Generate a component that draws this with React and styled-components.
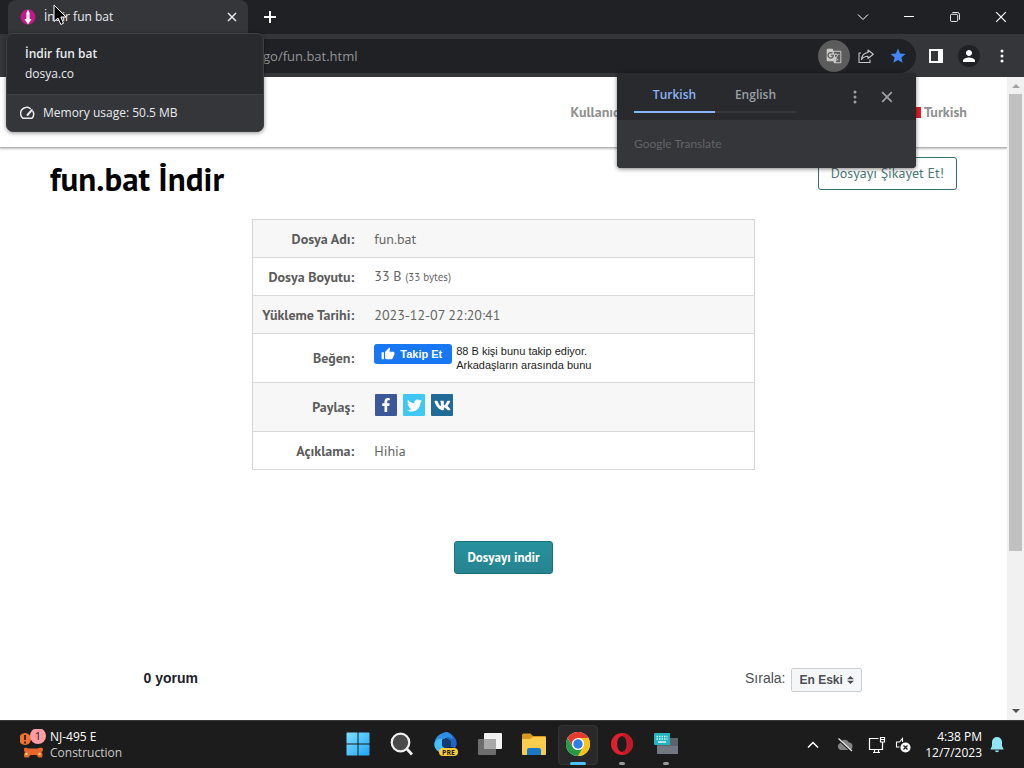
import React from "react";
import styled, { createGlobalStyle } from "styled-components";
import { FaFacebookF, FaTwitter, FaVk } from "react-icons/fa";
import { MdStar, MdPerson, MdGTranslate, MdThumbUp } from "react-icons/md";

const GlobalStyle = createGlobalStyle`
  *, *::before, *::after { box-sizing: border-box; }
  body { margin: 0; background: #fff; }
  button, input, select { font: inherit; color: inherit; margin: 0; }
  button { padding: 0; border: 0; background: none; cursor: pointer; }
  svg { display: block; flex: none; }
`;

const systemFont = `"Segoe UI", "Open Sans", "Noto Sans", sans-serif`;
const siteFont = `"PT Sans", "Noto Sans", sans-serif`;

const Desktop = styled.div`
  position: relative;
  display: flex;
  flex-direction: column;
  min-height: 100vh;
  overflow: hidden;
  font: 12px/16px ${systemFont};
`;

/* ---------- browser window ---------- */

const TabStrip = styled.header`
  display: flex;
  align-items: stretch;
  height: 34px;
  padding-left: 8px;
  background: #202124;
  color: #e8eaed;
`;

const Tab = styled.div`
  display: flex;
  align-items: center;
  gap: 8px;
  width: 240px;
  padding: 0 10px 0 12px;
  background: #35363a;
  border-radius: 8px 8px 0 0;
`;

const TabTitle = styled.span`
  flex: 1;
`;

const IconButton = styled.button`
  display: flex;
  align-items: center;
  justify-content: center;
  width: ${(p) => p.$w || 28}px;
  height: ${(p) => p.$h || 28}px;
  border-radius: ${(p) => (p.$round ? "50%" : "0")};
  background: ${(p) => p.$bg || "transparent"};
  color: ${(p) => p.$color || "inherit"};
`;

const NewTab = styled(IconButton)`
  align-self: center;
  margin-left: 8px;
`;

const WindowControls = styled.div`
  display: flex;
  align-items: center;
  margin-left: auto;
  color: #fff;
`;

const Toolbar = styled.div`
  display: flex;
  align-items: center;
  height: 43px;
  padding: 0 8px 0 112px;
  background: #35363a;
  color: #fff;
`;

const AddressBar = styled.div`
  display: flex;
  align-items: center;
  flex: 1;
  height: 34px;
  padding: 0 2px 0 151px;
  border-radius: 17px;
  background: #202124;
`;

const AddressInput = styled.input`
  flex: 1;
  min-width: 0;
  padding: 0;
  border: 0;
  outline: 0;
  background: transparent;
  color: #929497;
  font-size: 13px;
`;

const ToolbarActions = styled.div`
  display: flex;
  align-items: center;
  gap: 8px;
  margin-left: 6px;
`;

const Viewport = styled.main`
  display: flex;
  flex: 1;
  background: #fff;
`;

const Scrollbar = styled.div`
  display: flex;
  flex-direction: column;
  align-items: center;
  width: 17px;
  background: #f1f1f1;
`;

const ScrollArrow = styled.button`
  display: flex;
  align-items: center;
  justify-content: center;
  width: 17px;
  height: 17px;
`;

const ScrollTrack = styled.div`
  flex: 1;
  width: 13px;
`;

const ScrollThumb = styled.div`
  height: 75%;
  background: #c1c1c1;
`;

/* ---------- web page ---------- */

const Page = styled.div`
  flex: 1;
  min-width: 0;
  font: 14px/20px ${siteFont};
  color: #666;
`;

const SiteHeader = styled.nav`
  display: flex;
  align-items: center;
  justify-content: flex-end;
  height: 71px;
  padding-right: 40px;
  border-bottom: 1px solid #b4b4b4;
  box-shadow: 0 1px 2px rgba(0, 0, 0, 0.25);
`;

const NavLink = styled.a`
  display: flex;
  align-items: center;
  gap: 3px;
  margin-left: ${(p) => p.$gap || 0}px;
  color: #8f8f8f;
  font-weight: 700;
  text-decoration: none;
`;

const Flag = styled.span`
  width: 16px;
  height: 11px;
  background: #e11b22;
`;

const TitleRow = styled.section`
  display: flex;
  align-items: flex-start;
  justify-content: space-between;
  padding: 9px 50px 0;
`;

const Title = styled.h1`
  margin: 0;
  padding-top: 2px;
  color: #000;
  font: 700 33px/40px ${siteFont};
`;

const ReportLink = styled.a`
  padding: 0 12px;
  border: 1px solid #33706f;
  border-radius: 3px;
  color: #4c7777;
  line-height: 31px;
  text-decoration: none;
`;

const FileTable = styled.table`
  width: 50%;
  margin: 20px auto 0;
  border: 1px solid #d5d5d5;
  border-collapse: collapse;
`;

const Row = styled.tr`
  height: ${(p) => (p.$tall ? 49 : 38)}px;
  border-bottom: 1px solid #d9d9d9;
  &:nth-child(odd) {
    background: #f7f7f7;
  }
`;

const Label = styled.th`
  width: 102px;
  padding: 0;
  color: #5c5c5c;
  font-weight: 700;
  text-align: right;
  white-space: nowrap;
`;

const Value = styled.td`
  padding: 0 0 0 20px;
`;

const Bytes = styled.small`
  font-size: 11px;
`;

const Follow = styled.div`
  display: flex;
  align-items: flex-start;
  gap: 4px;
  color: #1c1e21;
  font: 11px/14px "Liberation Sans", Arial, sans-serif;
`;

const FollowButton = styled.button`
  display: flex;
  align-items: center;
  gap: 5px;
  height: 20px;
  padding: 0 10px 0 7px;
  border-radius: 3px;
  background: #1877f2;
  color: #fff;
  font-weight: 700;
`;

const ShareList = styled.div`
  display: flex;
  gap: 6px;
  padding: 0 0 4px 1px;
`;

const ShareLink = styled.a`
  display: flex;
  align-items: center;
  justify-content: center;
  width: 22px;
  height: 22px;
  border-radius: 1px;
  background: ${(p) => p.$bg};
  color: #fff;
`;

const DownloadRow = styled.div`
  display: flex;
  justify-content: center;
  margin-top: 71px;
`;

const DownloadButton = styled.button`
  height: 33px;
  padding: 0 12px;
  border: 1px solid #1d6f79;
  border-radius: 3px;
  background: linear-gradient(#27929f, #26838f);
  color: #fff;
  font-size: 13px;
  font-weight: 700;
`;

const Comments = styled.section`
  display: flex;
  align-items: flex-start;
  justify-content: space-between;
  width: 720px;
  max-width: 100%;
  margin: 94px auto 0;
  padding-right: 2px;
  color: #4b4f56;
  font: 14px/20px "Liberation Sans", Arial, sans-serif;
`;

const CommentCount = styled.h2`
  margin: 0;
  color: #1d2129;
  font-size: 14px;
`;

const SortLabel = styled.label`
  display: flex;
  align-items: flex-start;
  gap: 5px;
`;

const SortBox = styled.span`
  display: grid;
  align-items: center;
  width: 71px;
  > * {
    grid-area: 1 / 1;
  }
  > svg {
    justify-self: end;
    margin-right: 8px;
    pointer-events: none;
  }
`;

const SortSelect = styled.select`
  appearance: none;
  width: 100%;
  height: 24px;
  padding: 0 8px;
  border: 1px solid #ccd0d5;
  border-radius: 2px;
  background: #f5f6f7;
  font-size: 12px;
  font-weight: 700;
`;

/* ---------- floating layers ---------- */

const TabCard = styled.aside`
  position: absolute;
  top: 33px;
  left: 6px;
  width: 258px;
  border: 1px solid #3f4043;
  border-radius: 7px;
  overflow: hidden;
  background: #292a2d;
  color: #e8eaed;
  line-height: 20px;
  box-shadow: 0 1px 4px rgba(0, 0, 0, 0.45);
`;

const TabCardText = styled.div`
  padding: 10px 18px;
`;

const TabCardTitle = styled.strong`
  display: block;
  font-weight: 600;
`;

const MemoryRow = styled.div`
  display: flex;
  align-items: center;
  gap: 8px;
  height: 37px;
  padding: 0 13px;
  border-top: 1px solid #3f4043;
  background: #35363a;
  font-size: 12px;
`;

const TranslateCard = styled.aside`
  position: absolute;
  top: 73px;
  right: 108px;
  width: 299px;
  border-radius: 4px;
  overflow: hidden;
  background: #292a2d;
  color: #9aa0a6;
  box-shadow: 0 1px 4px rgba(0, 0, 0, 0.5);
`;

const TranslateTop = styled.div`
  display: flex;
  align-items: center;
  height: 47px;
  padding: 0 12px 0 17px;
`;

const LanguageTab = styled.button`
  width: 81px;
  height: 32px;
  padding-bottom: 2px;
  border-bottom: 2px solid ${(p) => (p.$active ? "#8ab4f8" : "#35373a")};
  color: ${(p) => (p.$active ? "#8ab4f8" : "#9aa0a6")};
  font-weight: 600;
`;

const LanguageTabs = styled.div`
  display: flex;
  padding-top: 0;
`;

const TranslateTools = styled.div`
  display: flex;
  gap: 1px;
  margin-left: auto;
`;

const TranslateFoot = styled.div`
  height: 48px;
  padding-left: 17px;
  background: #35363a;
  color: #626467;
  font: 12px/47px Lato, sans-serif;
`;

const Cursor = styled.svg`
  position: absolute;
  top: 4px;
  left: 53px;
`;

/* ---------- taskbar ---------- */

const Taskbar = styled.footer`
  display: grid;
  grid-template-columns: 1fr auto 1fr;
  align-items: center;
  height: 48px;
  padding: 0 20px;
  border-top: 1px solid #3a3a3a;
  background: #1c1c1c;
  color: #fff;
`;

const Traffic = styled.button`
  display: flex;
  align-items: center;
  gap: 4px;
  justify-self: start;
  text-align: left;
`;

const TrafficDetail = styled.span`
  display: block;
  color: #c8c8c8;
`;

const Apps = styled.div`
  display: flex;
  gap: 4px;
`;

const TaskbarApp = styled.button`
  display: grid;
  grid-template-rows: 36px 3px;
  place-items: center;
  width: 40px;
  height: 40px;
  border: 1px solid ${(p) => (p.$active ? "#343434" : "transparent")};
  border-radius: 4px;
  background: ${(p) => (p.$active ? "#292929" : "transparent")};
  &::after {
    content: "";
    width: ${(p) => (p.$active ? 16 : 6)}px;
    height: 3px;
    border-radius: 2px;
    background: ${(p) => (p.$active ? "#4cc2ff" : p.$running ? "#9a9a9a" : "transparent")};
  }
`;

const Tray = styled.div`
  display: flex;
  align-items: center;
  justify-self: end;
`;

const Clock = styled.time`
  margin: 0 8px 0 12px;
  text-align: right;
`;

/* ---------- drawings ---------- */

const Cross = ({ size = 10, width = 1.5 }) => (
  <svg width={size} height={size} viewBox="0 0 10 10" stroke="currentColor" strokeWidth={width} fill="none">
    <path d="M1 1l8 8M9 1L1 9" />
  </svg>
);

const Dots = () => (
  <svg width="4" height="14" viewBox="0 0 4 14" fill="currentColor">
    <circle cx="2" cy="2" r="1.5" />
    <circle cx="2" cy="7" r="1.5" />
    <circle cx="2" cy="12" r="1.5" />
  </svg>
);

const Favicon = () => (
  <svg width="16" height="16" viewBox="0 0 16 16">
    <circle cx="8" cy="8" r="7.5" fill="#c5168c" />
    <path d="M6.4 4L8 .5 9.600 4v6h2L8 15.500 4.400 10h2z" fill="#fff" />
  </svg>
);

const Gauge = () => (
  <svg width="15" height="15" viewBox="0 0 15 15" fill="none" stroke="currentColor" strokeWidth="1.5" strokeLinecap="round">
    <path d="M10.3 2.6A6 6 0 0 0 3 12.3h9A6 6 0 0 0 12.9 5.3" />
    <path d="M7.5 9l4.3-4.9" strokeWidth="2" />
  </svg>
);

const Share = () => (
  <svg width="16" height="16" viewBox="0 0 16 16" fill="none" stroke="#c3c5c8" strokeWidth="1.1" strokeLinejoin="round">
    <path d="M3 5H1v9.500h11v-3" />
    <path d="M10 2l5.300 4.300-5.300 4.200V8.200C7 8.200 5 9 3.500 11.500c.3-4 2.500-6.500 6.500-7z" />
  </svg>
);

const Triangle = ({ up }) => (
  <svg width="8" height="5" viewBox="0 0 8 5" fill={up ? "#a3a3a3" : "#505050"}>
    <path d={up ? "M0 5l4-4 4 4z" : "M0 0l4 4 4-4z"} />
  </svg>
);

const TrafficIcon = () => (
  <svg width="26" height="32" viewBox="2 2 26 32">
    <circle cx="7" cy="12" r="6" fill="#f0722b" />
    <path d="M7 8v5M7 14.500v2" stroke="#2b1a12" strokeWidth="1.800" />
    <path d="M6 22c0-2 3-1.500 4.500-.5h9c1.500-1 5.500-1.500 5.500.5 0 1.500-.5 2.500-1.500 3 1 1.500 1.500 3 .500 5.500h-3.500l-2-2.500h-6l-2 2.500H6.500c-1-2.500-.5-4 .5-5.500-.8-.5-1-1.500-1-3z" fill="#e8662c" />
    <circle cx="8.500" cy="27" r="1.300" fill="#f8d06a" />
    <circle cx="21.500" cy="27" r="1.300" fill="#f8d06a" />
    <circle cx="20" cy="9" r="8" fill="#ff9ca4" />
    <text x="20" y="13" textAnchor="middle" fontSize="11" fontFamily="Open Sans, sans-serif" fill="#1c1c1c">1</text>
  </svg>
);

const StartIcon = () => (
  <svg width="24" height="24" viewBox="0 0 24 24">
    <defs>
      <linearGradient id="win" x1="0" y1="0" x2="1" y2="1">
        <stop offset="0" stopColor="#7fe0ff" />
        <stop offset="1" stopColor="#1fa5f4" />
      </linearGradient>
    </defs>
    <path d="M1 .5h10.500v11H.5V1zM12.500.5H23l.5.5v10.500h-11zM.5 12.500h11v11H1l-.5-.5zM12.500 12.500h11V23l-.5.5H12.500z" fill="url(#win)" />
  </svg>
);

const SearchIcon = () => (
  <svg width="24" height="24" viewBox="0 0 24 24">
    <path d="M16 16l6 6.500" stroke="#eee" strokeWidth="2.800" />
    <circle cx="10.500" cy="10.500" r="8.800" fill="#4a4a4a" stroke="#eee" strokeWidth="2.200" />
  </svg>
);

const PreIcon = () => (
  <svg width="26" height="26" viewBox="0 0 26 26">
    <path d="M13 1c3 0 8 3 10 8 1 3 1 6-1 8l-6-2V9l-5-3z" fill="#1f66c4" />
    <path d="M13 1C8 2 3 5 2 10c-1 3-1 6 1 8l5 3 5-2-4-5V9l6-3 5 2c-1-4-4-7-7-7z" fill="#2c8fe6" />
    <path d="M1.500 12c1-3 4-5 7.500-4v6l5 5-5 3c-5-1-8-5-7.500-10z" fill="#45bdf7" />
    <path d="M9 10l4-3 5 3v5l-5 3-4-3z" fill="#123b70" />
    <rect x="6" y="17" width="19" height="8" rx="4" fill="#ffcb3c" />
    <text x="15.500" y="24" textAnchor="middle" fontSize="7" fontWeight="700" fontFamily="Open Sans, sans-serif" fill="#222">PRE</text>
  </svg>
);

const TaskViewIcon = () => (
  <svg width="25" height="24" viewBox="0 0 25 24">
    <rect x="6" y="1" width="18" height="16" rx="1" fill="#f2f2f2" />
    <rect x="0" y="7" width="18" height="16" rx="1" fill="#777" fillOpacity=".9" />
    <rect x="6" y="7" width="12" height="10" fill="#a9a9a9" />
  </svg>
);

const FolderIcon = () => (
  <svg width="26" height="24" viewBox="0 0 26 24">
    <path d="M1 3a1.500 1.500 0 0 1 1.500-1.500h7L12 4h12a1 1 0 0 1 1 1v4H1z" fill="#d89a1e" />
    <path d="M1 7h8l3-2h12a1 1 0 0 1 1 1v16a1 1 0 0 1-1 1H2a1 1 0 0 1-1-1z" fill="#f8cd4e" />
    <path d="M6 23v-5a2 2 0 0 1 2-2h10a2 2 0 0 1 2 2v5z" fill="#1a78c8" />
  </svg>
);

const ChromeIcon = () => (
  <svg width="24" height="24" viewBox="0 0 24 24">
    <circle cx="12" cy="12" r="12" fill="#fff" />
    <path d="M12 12L1.600 6A12 12 0 0 1 22.400 6H12z" fill="#e33b2e" />
    <path d="M12 6h10.400A12 12 0 0 1 12 24l5.200-9A6 6 0 0 0 12 6z" fill="#fbc116" />
    <path d="M1.600 6A12 12 0 0 0 12 24l5.200-9A6 6 0 0 1 6.800 15z" fill="#269b46" />
    <path d="M1.600 6L6.800 15A6 6 0 0 1 12 6z" fill="#e33b2e" />
    <circle cx="12" cy="12" r="6" fill="#fff" />
    <circle cx="12" cy="12" r="4.700" fill="#2f7de9" />
  </svg>
);

const OperaIcon = () => (
  <svg width="24" height="24" viewBox="0 0 24 24">
    <path fillRule="evenodd" d="M12 1a11 11 0 1 0 0 22 11 11 0 0 0 0-22zm0 3c3 0 4.800 3.700 4.800 8S15 20 12 20s-4.800-3.700-4.800-8S9 4 12 4z" fill="#e0202e" />
    <path d="M12 4c2-2 4-2 7-.5a11 11 0 0 1 0 17c-3 1.500-5 1.500-7-.5 3 0 4.800-3.700 4.800-8S15 4 12 4z" fill="#c01a27" />
  </svg>
);

const KeyboardIcon = () => (
  <svg width="26" height="24" viewBox="0 0 26 24">
    <rect x="4" y="6" width="21" height="16" fill="#5f636b" />
    <rect x="4" y="14" width="21" height="8" fill="#73777f" />
    <path d="M1 2a1 1 0 0 1 1-1h15v12H2a1 1 0 0 1-1-1z" fill="#22b5bd" />
    <path d="M3.500 4.500h11M3.500 7h11" stroke="#c8fbff" strokeWidth="1.300" strokeDasharray="1.500 1" />
    <path d="M5 10h8" stroke="#fff" strokeWidth="1.300" />
  </svg>
);

const ChevronUp = () => (
  <svg width="12" height="8" viewBox="0 0 12 8" fill="none" stroke="#fff" strokeWidth="1.500">
    <path d="M1 6.500l5-5 5 5" />
  </svg>
);

const CloudOff = () => (
  <svg width="18" height="16" viewBox="0 0 18 16">
    <path d="M4.500 13a3.700 3.700 0 0 1-.3-7A4.800 4.800 0 0 1 13 5.500 3.800 3.800 0 0 1 13.500 13z" fill="#858585" />
    <path d="M2 2l13.500 12.500" stroke="#1c1c1c" strokeWidth="2" />
    <path d="M2.500 1.500L16 14" stroke="#eee" strokeWidth="1.200" />
  </svg>
);

const NetworkIcon = () => (
  <svg width="18" height="18" viewBox="0 0 18 18" fill="none" stroke="#fff" strokeWidth="1.200">
    <path d="M10.500 2.500h-9v11h13V9M5 16.500h7M6.500 13.500v3M10.500 13.500v3" />
    <path d="M12.500 1.500h4v4.500h-4zM14.500 6v3M12.500 3.500h4" />
  </svg>
);

const MutedIcon = () => (
  <svg width="16" height="16" viewBox="0 0 16 16" fill="none" stroke="#fff" strokeWidth="1.100">
    <path d="M7.500 5V1.500L4.500 5H1.500v5h3" />
    <circle cx="10.500" cy="10.500" r="4.500" fill="#fff" />
    <path d="M8.500 8.500l4 4M12.500 8.500l-4 4" stroke="#1c1c1c" strokeWidth="1.300" />
  </svg>
);

const Bell = () => (
  <svg width="14" height="16" viewBox="0 0 14 16" fill="#8fe6f5">
    <path d="M7 0a5 5 0 0 0-5 5v4L.3 12.500h13.400L12 9V5a5 5 0 0 0-5-5zM4.800 13.500a2.300 2.300 0 0 0 4.400 0z" />
  </svg>
);

const apps = [
  { name: "Start", Icon: StartIcon },
  { name: "Search", Icon: SearchIcon },
  { name: "Copilot preview", Icon: PreIcon },
  { name: "Task view", Icon: TaskViewIcon },
  { name: "File Explorer", Icon: FolderIcon },
  { name: "Chrome", Icon: ChromeIcon, active: true },
  { name: "Opera", Icon: OperaIcon, running: true },
  { name: "On-screen keyboard", Icon: KeyboardIcon, running: true },
];

export default function App() {
  return (
    <Desktop>
      <GlobalStyle />
      <TabStrip>
        <Tab>
          <Favicon />
          <TabTitle>İndir fun bat</TabTitle>
          <IconButton $w={12} $h={16} aria-label="Close tab"><Cross /></IconButton>
        </Tab>
        <NewTab aria-label="New tab">
          <svg width="12" height="12" viewBox="0 0 12 12" stroke="#fff" strokeWidth="2"><path d="M6 0v12M0 6h12" /></svg>
        </NewTab>
        <WindowControls>
          <IconButton $w={46} aria-label="Search tabs">
            <svg width="12" height="8" viewBox="0 0 12 8" fill="none" stroke="currentColor"><path d="M1 1.500l5 5 5-5" /></svg>
          </IconButton>
          <IconButton $w={46} aria-label="Minimize">
            <svg width="10" height="2" viewBox="0 0 10 2"><path d="M0 .5h10" stroke="currentColor" /></svg>
          </IconButton>
          <IconButton $w={46} aria-label="Restore">
            <svg width="10" height="10" viewBox="0 0 11 11" fill="none" stroke="currentColor">
              <rect x=".5" y="2.500" width="8" height="8" rx="1.500" />
              <path d="M2.500.5h5.500a2.500 2.500 0 0 1 2.500 2.500v5.500" />
            </svg>
          </IconButton>
          <IconButton $w={46} aria-label="Close"><Cross size={12} width={1} /></IconButton>
        </WindowControls>
      </TabStrip>

      <Toolbar>
        <AddressBar>
          <AddressInput aria-label="Address" defaultValue="go/fun.bat.html" />
          <IconButton $w={32} $h={32} $round $bg="#5b5c5b" $color="#c9cac9" aria-label="Translate this page"><MdGTranslate size={16} /></IconButton>
          <IconButton $w={32} $h={32} aria-label="Share"><Share /></IconButton>
          <IconButton $w={32} $h={32} $color="#4285f4" aria-label="Bookmark"><MdStar size={18} /></IconButton>
        </AddressBar>
        <ToolbarActions>
          <IconButton aria-label="Side panel">
            <svg width="14" height="14" viewBox="0 0 14 14"><path fillRule="evenodd" d="M0 0h14v14H0zM2 2v10h7V2z" fill="#fff" /></svg>
          </IconButton>
          <IconButton $round $w={22} $h={22} $bg="#202124" aria-label="Profile"><MdPerson size={18} /></IconButton>
          <IconButton aria-label="Menu"><Dots /></IconButton>
        </ToolbarActions>
      </Toolbar>

      <Viewport>
        <Page lang="tr">
          <SiteHeader>
            <NavLink href="#login">Kullanıcı Girişi</NavLink>
            <NavLink href="#language" $gap={248}><Flag />Turkish</NavLink>
          </SiteHeader>
          <TitleRow>
            <Title>fun.bat İndir</Title>
            <ReportLink href="#report">Dosyayı Şikayet Et!</ReportLink>
          </TitleRow>
          <FileTable>
            <tbody>
              <Row><Label scope="row">Dosya Adı:</Label><Value>fun.bat</Value></Row>
              <Row><Label scope="row">Dosya Boyutu:</Label><Value>33 B <Bytes>(33 bytes)</Bytes></Value></Row>
              <Row><Label scope="row">Yükleme Tarihi:</Label><Value>2023-12-07 22:20:41</Value></Row>
              <Row $tall>
                <Label scope="row">Beğen:</Label>
                <Value>
                  <Follow>
                    <FollowButton><MdThumbUp size={14} />Takip Et</FollowButton>
                    <span>88 B kişi bunu takip ediyor.<br />Arkadaşların arasında bunu</span>
                  </Follow>
                </Value>
              </Row>
              <Row $tall>
                <Label scope="row">Paylaş:</Label>
                <Value>
                  <ShareList>
                    <ShareLink href="#facebook" aria-label="Facebook" $bg="#3b5998"><FaFacebookF size={14} /></ShareLink>
                    <ShareLink href="#twitter" aria-label="Twitter" $bg="#3fc8f4"><FaTwitter size={15} /></ShareLink>
                    <ShareLink href="#vk" aria-label="VK" $bg="#1f6a96"><FaVk size={17} /></ShareLink>
                  </ShareList>
                </Value>
              </Row>
              <Row><Label scope="row">Açıklama:</Label><Value>Hihia</Value></Row>
            </tbody>
          </FileTable>
          <DownloadRow><DownloadButton>Dosyayı indir</DownloadButton></DownloadRow>
          <Comments>
            <CommentCount>0 yorum</CommentCount>
            <SortLabel>
              Sırala:
              <SortBox>
                <SortSelect defaultValue="old"><option value="old">En Eski</option></SortSelect>
                <svg width="7" height="8" viewBox="0 0 7 8" fill="#4b4f56"><path d="M0 3.300L3.500 0 7 3.300zM0 4.700L3.500 8 7 4.700z" /></svg>
              </SortBox>
            </SortLabel>
          </Comments>
        </Page>
        <Scrollbar>
          <ScrollArrow aria-label="Scroll up"><Triangle up /></ScrollArrow>
          <ScrollTrack><ScrollThumb /></ScrollTrack>
          <ScrollArrow aria-label="Scroll down"><Triangle /></ScrollArrow>
        </Scrollbar>
      </Viewport>

      <Taskbar>
        <Traffic>
          <TrafficIcon />
          <span>NJ-495 E<TrafficDetail>Construction</TrafficDetail></span>
        </Traffic>
        <Apps>
          {apps.map(({ name, Icon, active, running }) => (
            <TaskbarApp key={name} aria-label={name} $active={active} $running={running}><Icon /></TaskbarApp>
          ))}
        </Apps>
        <Tray>
          <IconButton $w={32} aria-label="Hidden icons"><ChevronUp /></IconButton>
          <IconButton $w={32} aria-label="OneDrive"><CloudOff /></IconButton>
          <IconButton $w={32} aria-label="Network"><NetworkIcon /></IconButton>
          <IconButton $w={20} aria-label="Volume"><MutedIcon /></IconButton>
          <Clock>4:38 PM<br />12/7/2023</Clock>
          <IconButton $w={14} aria-label="Notifications"><Bell /></IconButton>
        </Tray>
      </Taskbar>

      <TabCard>
        <TabCardText>
          <TabCardTitle>İndir fun bat</TabCardTitle>
          dosya.co
        </TabCardText>
        <MemoryRow><Gauge />Memory usage: 50.5 MB</MemoryRow>
      </TabCard>

      <TranslateCard>
        <TranslateTop>
          <LanguageTabs>
            <LanguageTab $active>Turkish</LanguageTab>
            <LanguageTab>English</LanguageTab>
          </LanguageTabs>
          <TranslateTools>
            <IconButton aria-label="Translate options"><Dots /></IconButton>
            <IconButton $w={34} aria-label="Close translate"><Cross size={12} /></IconButton>
          </TranslateTools>
        </TranslateTop>
        <TranslateFoot>Google Translate</TranslateFoot>
      </TranslateCard>

      <Cursor width="14" height="22" viewBox="0 0 14 22">
        <path d="M1 1v16.500l4-3.500 2.800 6.500 2.700-1.200L7.800 13H13z" fill="#000" stroke="#fff" />
      </Cursor>
    </Desktop>
  );
}
